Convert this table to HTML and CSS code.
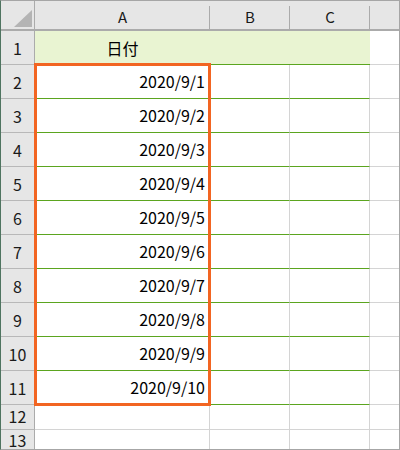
FILE: index.html
```html
<!DOCTYPE html>
<html lang="ja">
<head>
<meta charset="utf-8">
<title>Sheet</title>
<link rel="stylesheet" href="styles.css">
</head>
<body>
<div class="sheet">
  <div class="grid">
    <div class="cell corner">
      <svg class="corner-tri" width="33" height="28" viewBox="0 0 33 28"><polygon points="13,26 31,26 31,9" fill="#b4b4b4"/></svg>
    </div>
    <div class="cell colhead">A</div>
    <div class="cell colhead">B</div>
    <div class="cell colhead">C</div>
    <div class="cell colhead last"></div>

    <div class="cell rowhead">1</div>
    <div class="cell title">日付</div>
    <div class="cell title"></div>
    <div class="cell title"></div>
    <div class="cell last"></div>

    <div class="cell rowhead">2</div><div class="cell data date">2020/9/1</div><div class="cell data"></div><div class="cell data"></div><div class="cell last"></div>
    <div class="cell rowhead">3</div><div class="cell data date">2020/9/2</div><div class="cell data"></div><div class="cell data"></div><div class="cell last"></div>
    <div class="cell rowhead">4</div><div class="cell data date">2020/9/3</div><div class="cell data"></div><div class="cell data"></div><div class="cell last"></div>
    <div class="cell rowhead">5</div><div class="cell data date">2020/9/4</div><div class="cell data"></div><div class="cell data"></div><div class="cell last"></div>
    <div class="cell rowhead">6</div><div class="cell data date">2020/9/5</div><div class="cell data"></div><div class="cell data"></div><div class="cell last"></div>
    <div class="cell rowhead">7</div><div class="cell data date">2020/9/6</div><div class="cell data"></div><div class="cell data"></div><div class="cell last"></div>
    <div class="cell rowhead">8</div><div class="cell data date">2020/9/7</div><div class="cell data"></div><div class="cell data"></div><div class="cell last"></div>
    <div class="cell rowhead">9</div><div class="cell data date">2020/9/8</div><div class="cell data"></div><div class="cell data"></div><div class="cell last"></div>
    <div class="cell rowhead">10</div><div class="cell data date">2020/9/9</div><div class="cell data"></div><div class="cell data"></div><div class="cell last"></div>
    <div class="cell rowhead">11</div><div class="cell data date">2020/9/10</div><div class="cell data"></div><div class="cell data"></div><div class="cell last"></div>

    <div class="cell rowhead short">12</div><div class="cell"></div><div class="cell"></div><div class="cell"></div><div class="cell last"></div>
    <div class="cell rowhead bottom">13</div><div class="cell bottom"></div><div class="cell bottom"></div><div class="cell bottom"></div><div class="cell last bottom"></div>
  </div>
  <div class="selection"></div>
</div>
</body>
</html>
```

FILE: styles.css
```css
* { box-sizing: border-box; }

html, body {
  margin: 0;
  padding: 0;
  background: #ffffff;
}

.sheet {
  position: relative;
  width: 400px;
  height: 450px;
  overflow: hidden;
  border-top: 1px solid #a6a6a6;
  border-right: 1px solid #a6a6a6;
  border-bottom: 1px solid #a6a6a6;
  border-left: 1px solid #4f7460;
  font-family: "Noto Sans CJK JP", "Noto Sans", sans-serif;
  color: #000;
}

.grid {
  display: grid;
  grid-template-columns: 34px 175px 80px 80px 29px;
  grid-template-rows: 30px repeat(11, 34px) 25px 19px;
}

.cell {
  border-right: 1px solid #d4d4d4;
  border-bottom: 1px solid #d4d4d4;
  background: #fff;
  display: flex;
  align-items: center;
  font-size: 16px;
  line-height: 1;
}

.cell.last { border-right: none; }

.corner {
  position: relative;
  background: #e6e6e6;
  border-right: 1px solid #ababab;
  border-bottom: 2px solid #ababab;
}

.corner-tri {
  position: absolute;
  left: 0;
  top: 0;
}

.colhead {
  position: relative;
  background: #e6e6e6;
  border-right: none;
  border-bottom: 2px solid #ababab;
  justify-content: center;
  font-size: 15px;
  color: #1a1a1a;
  padding-top: 3px;
}

.colhead::after {
  content: "";
  position: absolute;
  right: 0;
  top: 5px;
  bottom: 0;
  width: 1px;
  background: #ababab;
}

.colhead.last::after { display: none; }

.rowhead {
  background: #e6e6e6;
  border-right: 1px solid #ababab;
  border-bottom: 1px solid #b8b8b8;
  justify-content: center;
  color: #1a1a1a;
  padding-top: 1px;
}

.rowhead.short {
  padding-top: 0;
  padding-bottom: 2px;
}

.cell.bottom {
  border-bottom: none;
}

.rowhead.bottom {
  padding-top: 1px;
}

.title {
  background: #e9f4d2;
  border-right: none;
  border-bottom: 1px solid #5ba51f;
  justify-content: center;
}

.data {
  border-bottom: 1px solid #5ba51f;
}

.date {
  justify-content: flex-end;
  padding-right: 4px;
  padding-bottom: 1px;
}

.selection {
  position: absolute;
  left: 33px;
  top: 62px;
  width: 177px;
  height: 343px;
  border: 3px solid #f26522;
  pointer-events: none;
}
```
